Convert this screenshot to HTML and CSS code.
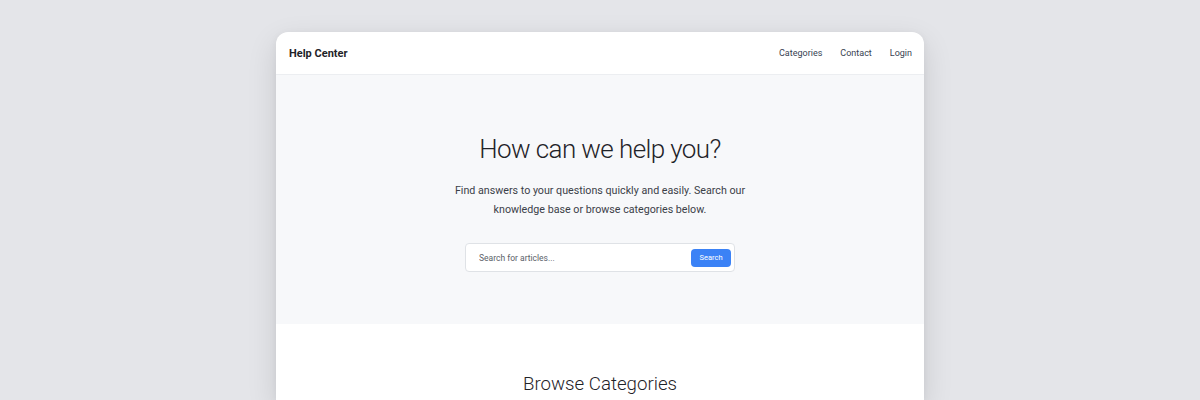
FILE: index.html
```html
<!DOCTYPE html>
<html lang="en">
<head>
<meta charset="utf-8">
<title>Help Center</title>
<link rel="stylesheet" href="styles.css">
</head>
<body>
<div class="page">
  <div class="card">
    <header class="topbar">
      <div class="brand">Help Center</div>
      <nav class="nav">
        <a href="#">Categories</a>
        <a href="#">Contact</a>
        <a href="#">Login</a>
      </nav>
    </header>
    <section class="hero">
      <h1>How can we help you?</h1>
      <p>Find answers to your questions quickly and easily. Search our knowledge base or browse categories below.</p>
      <form class="search">
        <input type="text" placeholder="Search for articles...">
        <button type="button">Search</button>
      </form>
    </section>
    <section class="browse">
      <h2>Browse Categories</h2>
    </section>
  </div>
</div>
</body>
</html>
```

FILE: styles.css
```css
* { box-sizing: border-box; }
html, body { margin: 0; padding: 0; }
body {
  background: #e4e5e9;
  font-family: Roboto, "Noto Sans", sans-serif;
  color: #1f2328;
  height: 400px;
  overflow: hidden;
}
.page {
  display: flex;
  justify-content: center;
  padding-top: 32px;
}
.card {
  width: 648px;
  background: #ffffff;
  border-radius: 12px 12px 0 0;
  box-shadow: 0 10px 30px rgba(0,0,0,0.12), 0 2px 8px rgba(0,0,0,0.05);
  overflow: hidden;
  height: 368px;
}
.topbar {
  height: 43px;
  display: flex;
  align-items: center;
  justify-content: space-between;
  padding: 0 12px 0 13px;
  border-bottom: 1px solid #eceef1;
}
.brand {
  font-size: 11px;
  font-weight: 700;
  color: #1f2328;
}
.nav {
  display: flex;
  gap: 18px;
}
.nav a {
  font-size: 9px;
  color: #374151;
  text-decoration: none;
}
.hero {
  background: #f7f8fa;
  padding: 57px 0 52px;
  display: flex;
  flex-direction: column;
  align-items: center;
  text-align: center;
}
.hero h1 {
  margin: 0;
  font-size: 26px;
  font-weight: 300;
  line-height: 34px;
  letter-spacing: -0.6px;
  color: #1f2328;
}
.hero p {
  margin: 15px 0 0;
  width: 300px;
  font-size: 10.7px;
  line-height: 19px;
  color: #3b4048;
}
.search {
  margin-top: 24px;
  width: 270px;
  height: 29px;
  display: flex;
  align-items: center;
  background: #ffffff;
  border: 1px solid #dfe2e6;
  border-radius: 4px;
  padding: 0 3px 0 13px;
}
.search input {
  flex: 1;
  border: none;
  outline: none;
  background: transparent;
  font-family: inherit;
  font-size: 8.5px;
  color: #374151;
  padding: 0;
}
.search input::placeholder { color: #5b6169; }
.search button {
  width: 40px;
  height: 18px;
  border: none;
  border-radius: 4px;
  background: #3b82f6;
  color: #ffffff;
  font-family: inherit;
  font-size: 7.5px;
  padding: 0;
}
.browse {
  padding: 48px 0 0;
  text-align: center;
}
.browse h2 {
  margin: 0;
  font-size: 18.7px;
  font-weight: 300;
  line-height: 25px;
  color: #1f2328;
}
```
